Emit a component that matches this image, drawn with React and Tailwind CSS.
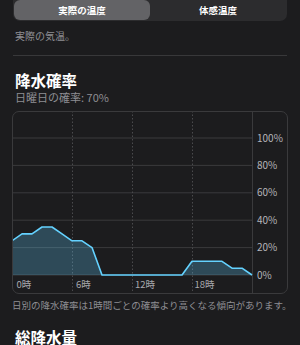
import React from "react";

// hourly chance of rain, 0時..24時
const hourly = [25, 30, 30, 35, 35, 30, 25, 25, 20, 0, 0, 0, 0, 0, 0, 0, 0, 0, 10, 10, 10, 10, 5, 5, 0];

const gridY = [27, 54.4, 81.8, 109.2, 136.6, 164];
const yLabels = ["100%", "80%", "60%", "40%", "20%", "0%"];

const PrecipChart = () => {
  const pts = hourly.map((p, h) => [h * 10, 164 - 1.37 * p]);
  const line = pts.map(([x, y], i) => `${i ? "L" : "M"}${x} ${y.toFixed(1)}`).join(" ");
  const area = `${line} L240 164 L0 164 Z`;

  return (
    <div className="ml-[-1px] mt-[7px] w-[276px] h-[183px] rounded-[7px] border border-[#3a3a3c] overflow-hidden">
      <svg width="276" height="183" className="block -m-px">
        {gridY.map((y) => (
          <line key={y} x1="0" x2="240" y1={y} y2={y} stroke="#3a3a3c" strokeWidth="1" />
        ))}
        {[60, 120, 180].map((x) => (
          <line key={x} x1={x + 0.5} x2={x + 0.5} y1="0" y2="183" stroke="#4a4a4d" strokeWidth="1" strokeDasharray="1.5 2" />
        ))}
        <line x1="240.5" x2="240.5" y1="0" y2="183" stroke="#3a3a3c" strokeWidth="1" />
        <path d={area} fill="#64d2ff" fillOpacity="0.26" />
        <path d={line} fill="none" stroke="#64d2ff" strokeWidth="1.6" strokeLinejoin="round" />
        {yLabels.map((t, i) => (
          <text
            key={t}
            x="245"
            y={gridY[i] + 3.6}
            fontSize="10"
            fill="#b4b4b9"
            fontFamily="'Noto Sans CJK JP', sans-serif"
          >
            {t}
          </text>
        ))}
        {[
          ["0時", 4.5],
          ["6時", 64],
          ["12時", 123],
          ["18時", 182.5],
        ].map(([t, x]) => (
          <text key={t} x={x} y="176.5" fontSize="9.5" fill="#a8a8ad" fontFamily="'Noto Sans CJK JP', sans-serif">
            {t}
          </text>
        ))}
      </svg>
    </div>
  );
};

export default function App() {
  return (
    <div className="w-[300px] h-[345px] overflow-hidden bg-[#1c1c1e] px-[13px] font-['Noto_Sans_CJK_JP',sans-serif] text-white">
      {/* Segmented control */}
      <div className="mt-[-8px] h-[29px] pt-[8px] rounded-[7px] bg-[#2c2c2e] flex p-[1px]">
        <div className="flex-1 rounded-[6px] bg-[#636366] flex items-center justify-center text-[9.5px] font-bold">
          実際の温度
        </div>
        <div className="flex-1 flex items-center justify-center text-[9.5px] font-bold">体感温度</div>
      </div>

      <p className="mt-[8px] ml-[2px] text-[10px] leading-[14px] text-[#8e8e93]">実際の気温。</p>

      <div className="mt-[12px] h-px bg-[#38383a]" />

      <h2 className="mt-[14px] ml-[2px] text-[15.5px] leading-[20px] font-bold">降水確率</h2>
      <p className="ml-[2px] text-[11px] leading-[14px] text-[#8e8e93]">日曜日の確率: 70%</p>

      <PrecipChart />

      <p className="mt-[5px] ml-[-1px] text-[9.5px] leading-[13px] text-[#8e8e93] whitespace-nowrap">
        日別の降水確率は1時間ごとの確率より高くなる傾向があります。
      </p>

      <h2 className="mt-[15px] ml-[2px] text-[15.5px] leading-[20px] font-bold">総降水量</h2>
    </div>
  );
}
